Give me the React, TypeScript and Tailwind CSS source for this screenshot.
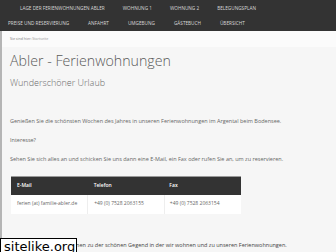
const NAV_ROW_1 = ['Lage der Ferienwohnungen Abler', 'Wohnung 1', 'Wohnung 2', 'Belegungsplan'];
const NAV_ROW_2 = ['Preise und Reservierung', 'Anfahrt', 'Umgebung', 'Gästebuch', 'Übersicht'];

function NavRow({ items, className }: { items: string[]; className: string }) {
  return (
    <ul className={`flex items-center ${className}`}>
      {items.map((item) => (
        <li key={item} className="whitespace-nowrap uppercase text-[4.7px] leading-none text-[#d8d8d8]">
          {item}
        </li>
      ))}
    </ul>
  );
}

export default function App() {
  return (
    <div className="relative h-[252px] w-[336px] overflow-hidden bg-[#f6f6f6] font-['Open_Sans',sans-serif]">
      {/* top menu */}
      <nav className="flex h-[31px] flex-col justify-center gap-[10px] bg-[#333333] pt-[1px] shadow-[0_1px_2px_rgba(0,0,0,0.4)]">
        <NavRow items={NAV_ROW_1} className="gap-[18px] pl-[20px]" />
        <NavRow items={NAV_ROW_2} className="gap-[19px] pl-[8px]" />
      </nav>

      <div className="h-[221px] border-l-2 border-[#b5b5b5]">
        <div className="flex h-[16px] items-center bg-[#fbfbfb] pl-[8px] text-[3.6px] text-[#777]">
          Sie sind hier: <span className="ml-[1px] text-[#999]">Startseite</span>
        </div>

        <div className="px-[8px]">
          <h1 className="mt-[6px] text-[14.2px] font-light leading-[16px] text-[#5a5a5a]">Abler - Ferienwohnungen</h1>
          <h2 className="mt-[8px] text-[9px] font-light leading-[12px] text-[#6a6a6a]">Wunderschöner Urlaub</h2>

          <div className="mt-[29px] space-y-[13px] text-[5.5px] leading-[6px] text-[#666]">
            <p>Genießen Sie die schönsten Wochen des Jahres in unseren Ferienwohnungen im Argental beim Bodensee.</p>
            <p>Interesse?</p>
            <p>Sehen Sie sich alles an und schicken Sie uns dann eine E-Mail, ein Fax oder rufen Sie an, um zu reservieren.</p>
          </div>

          <table className="mt-[14px] ml-[1px] w-[230px] table-fixed border-collapse text-[5px]">
            <thead>
              <tr className="h-[18px] border-t border-[#999] bg-[#333333] text-left font-semibold text-white">
                <th className="pl-[6px] font-semibold">E-Mail</th>
                <th className="pl-[6px] font-semibold">Telefon</th>
                <th className="pl-[5px] font-semibold">Fax</th>
              </tr>
            </thead>
            <tbody>
              <tr className="h-[19px] bg-white text-[#666]">
                <td className="border-r border-[#eeeeee] pl-[6px]">ferien (at) familie-abler.de</td>
                <td className="border-r border-[#eeeeee] pl-[6px]">+49 (0) 7528 2063155</td>
                <td className="pl-[5px]">+49 (0) 7528 2063154</td>
              </tr>
            </tbody>
          </table>

          <p className="mt-[28px] text-[5.5px] leading-[6px] text-[#444]">
            Hier finden Sie Informationen zu der schönen Gegend in der wir wohnen und zu unseren Ferienwohnungen.
          </p>
        </div>
      </div>

      {/* watermark */}
      <div className="absolute bottom-[-2px] left-0 flex h-[16px] w-[77px] items-center border border-black bg-white pl-[3px] font-['DejaVu_Sans',sans-serif] text-[13px] leading-none text-black">
        sitelike.org
      </div>
    </div>
  );
}
